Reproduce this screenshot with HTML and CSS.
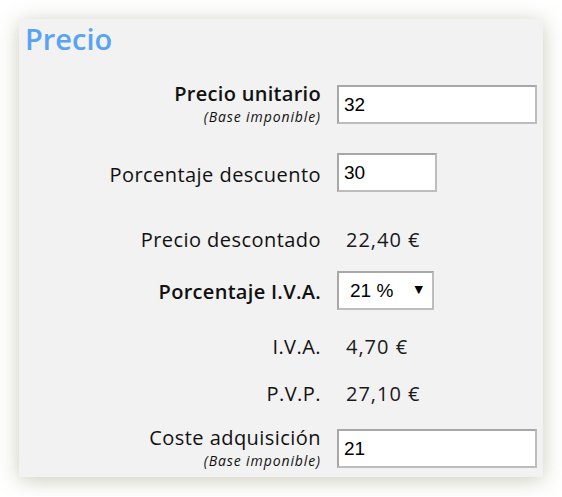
FILE: index.html
```html
<!DOCTYPE html>
<html>
<head>
<meta charset="utf-8">
<title>Precio</title>
<link rel="stylesheet" href="styles.css">
</head>
<body>
<div class="panel">
  <h2 class="title">Precio</h2>
  <div class="form">
    <div class="row r-unit">
      <label class="lbl strong two" for="unit">Precio unitario<small>(Base imponible)</small></label>
      <input class="field wide" id="unit" type="text" value="32">
    </div>
    <div class="row r-desc">
      <label class="lbl one" for="desc">Porcentaje descuento</label>
      <input class="field short" id="desc" type="text" value="30">
    </div>
    <div class="row r-pdesc">
      <span class="lbl">Precio descontado</span>
      <span class="val">22,40 €</span>
    </div>
    <div class="row r-iva">
      <label class="lbl strong one" for="iva">Porcentaje I.V.A.</label>
      <div class="select-wrap">
        <select class="field pick" id="iva">
          <option>21 %</option>
          <option>10 %</option>
          <option>4 %</option>
        </select>
        <span class="arrow">▼</span>
      </div>
    </div>
    <div class="row r-ivaval">
      <span class="lbl">I.V.A.</span>
      <span class="val">4,70 €</span>
    </div>
    <div class="row r-pvp">
      <span class="lbl">P.V.P.</span>
      <span class="val">27,10 €</span>
    </div>
    <div class="row r-coste">
      <label class="lbl two" for="coste">Coste adquisición<small>(Base imponible)</small></label>
      <input class="field wide" id="coste" type="text" value="21">
    </div>
  </div>
</div>
</body>
</html>
```

FILE: styles.css
```css
html{
    background: #fff;
}
body{
    margin: 0;
    padding: 19px;
    font-family: "Open Sans", sans-serif;
    color: #111;
}
.panel{
    width: 524px;
    height: 458px;
    box-sizing: border-box;
    background: #f2f2f2;
    box-shadow: 0 3px 20px rgba(115, 115, 70, 0.36);
    padding: 0 6px;
}
.title{
    margin: 0;
    font-size: 29px;
    font-weight: 600;
    line-height: 40px;
    color: #5aa2f2;
}

.row{
    display: grid;
    grid-template-columns: 296px 1fr;
    column-gap: 16px;
    align-items: start;
}
.lbl{
    text-align: right;
    font-size: 20px;
    line-height: 28px;
    letter-spacing: 0.45px;
}
.lbl.strong{
    font-weight: 600;
    letter-spacing: 0.3px;
}
.lbl.one{
    padding-top: 8px;
}
.lbl.two{
    line-height: 21px;
    margin-top: -2px;
}
.lbl small{
    display: block;
    font-size: 14px;
    line-height: 26px;
    font-style: italic;
    font-weight: 400;
    letter-spacing: 0.9px;
}
.val{
    font-size: 20px;
    line-height: 28px;
    letter-spacing: 1px;
    color: #1a1a1a;
    padding-left: 9px;
}

.field{
    box-sizing: border-box;
    height: 39px;
    margin: 0;
    border: 2px solid #bdbdbd;
    border-top-color: #a8a8a8;
    border-left-color: #a8a8a8;
    background: #fff;
    font-family: "Liberation Sans", Arial, sans-serif;
    font-size: 19px;
    color: #000;
    padding: 0 5px;
    outline: none;
}
.field.wide{ width: 200px; }
.field.short{ width: 100px; }

.select-wrap{
    position: relative;
    width: 97px;
}
.field.pick{
    width: 97px;
    -webkit-appearance: none;
    appearance: none;
    padding-left: 11px;
    border-radius: 0;
}
.arrow{
    position: absolute;
    right: 11px;
    top: 12px;
    font-size: 11px;
    color: #000;
    pointer-events: none;
    font-family: "DejaVu Sans", sans-serif;
}

.r-unit{ margin-top: 26px; }
.r-desc{ margin-top: 23px; }
.r-pdesc{ margin-top: 34px; }
.r-iva{ margin-top: 17px; }
.r-iva .lbl.one{ padding-top: 7px; }
.r-ivaval{ margin-top: 23px; }
.r-pvp{ margin-top: 19px; }
.r-coste{ margin-top: 21px; }
```
